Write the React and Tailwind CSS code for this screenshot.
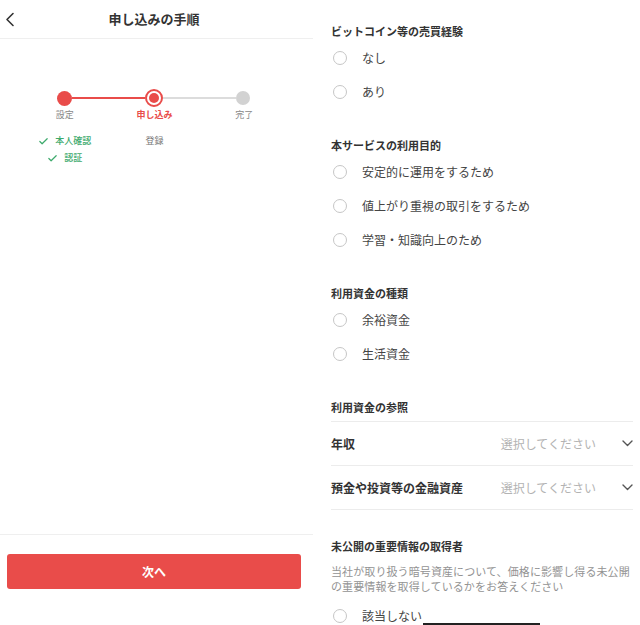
import { Check } from 'lucide-react'

const RED = 'bg-[#e94c4a]'

function Radio({ label }) {
  return (
    <div className="h-[34px] flex items-center">
      <span className="ml-[2px] w-[14px] h-[14px] rounded-full border-[1.5px] border-[#c6c6c6]" />
      <span className="ml-[15px] text-[12px] text-[#444]">{label}</span>
    </div>
  )
}

function SectionTitle({ children }) {
  return (
    <div className="h-[20px] flex items-center text-[11px] font-bold text-[#333]">{children}</div>
  )
}

function SelectRow({ label }) {
  return (
    <div className="h-[44px] flex items-center justify-between border-b border-[#ececec]">
      <span className="text-[12px] font-semibold text-[#333]">{label}</span>
      <div className="flex items-center gap-[26px]">
        <span className="text-[12px] text-[#b3b3b3]">選択してください</span>
        <svg width="11" height="7" viewBox="0 0 11 7" fill="none">
          <path d="M1 1l4.5 4.5L10 1" stroke="#555" strokeWidth="1.4" strokeLinecap="round" strokeLinejoin="round" />
        </svg>
      </div>
    </div>
  )
}

function LeftPanel() {
  return (
    <div className="w-[313px] h-[625px] flex flex-col bg-white">
      {/* Header */}
      <div className="h-[39px] border-b border-[#efefef] flex items-center relative">
        <svg className="ml-[5px]" width="10" height="15" viewBox="0 0 10 15" fill="none">
          <path d="M8 1.5L2 7.5l6 6" stroke="#333" strokeWidth="1.6" strokeLinecap="round" strokeLinejoin="round" />
        </svg>
        <div className="absolute inset-0 flex items-center justify-center pr-[5px] text-[13px] font-bold text-[#333]">
          申し込みの手順
        </div>
      </div>

      {/* Stepper */}
      <div className="mt-[50px] h-[18px] ml-[57px] w-[193px] flex items-center">
        <span className={`w-[15px] h-[15px] rounded-full ${RED}`} />
        <span className={`flex-1 h-[2px] ${RED}`} />
        <span className="w-[18px] h-[18px] rounded-full border-[2px] border-[#e94c4a] bg-white flex items-center justify-center">
          <span className={`w-[10px] h-[10px] rounded-full ${RED}`} />
        </span>
        <span className="flex-1 h-[2px] bg-[#dcdcdc]" />
        <span className="w-[14px] h-[14px] rounded-full bg-[#d2d2d2]" />
      </div>
      <div className="mt-[1px] ml-[20px] w-[269px] grid grid-cols-3 text-center text-[9px] h-[14px] items-center">
        <span className="text-[#888]">設定</span>
        <span className="text-[#e94c4a] font-bold">申し込み</span>
        <span className="text-[#888]">完了</span>
      </div>
      <div className="mt-[11px] ml-[20px] w-[269px] grid grid-cols-3 text-[9px]">
        <div className="flex flex-col items-center gap-[1px]">
          <div className="h-[16px] flex items-center gap-[6px] text-[#3daa6c] font-medium">
            <Check className="w-[11px] h-[11px]" strokeWidth={2.6} />
            <span>本人確認</span>
          </div>
          <div className="h-[16px] flex items-center gap-[6px] text-[#3daa6c] font-medium">
            <Check className="w-[11px] h-[11px]" strokeWidth={2.6} />
            <span>認証</span>
          </div>
        </div>
        <div className="flex justify-center">
          <div className="h-[16px] flex items-center text-[#777]">登録</div>
        </div>
        <div />
      </div>

      <div className="flex-1" />

      {/* Footer */}
      <div className="h-[91px] border-t border-[#efefef] pt-[19px]">
        <button className={`ml-[7px] w-[294px] h-[35px] rounded-[3px] ${RED} text-white text-[12px] font-bold`}>
          次へ
        </button>
      </div>
    </div>
  )
}

function RightPanel() {
  return (
    <div className="relative flex-1 h-[625px] overflow-hidden bg-white pl-[18px] pr-[7px] pt-[21px] flex flex-col gap-[26px]">
      <div>
        <SectionTitle>ビットコイン等の売買経験</SectionTitle>
        <Radio label="なし" />
        <Radio label="あり" />
      </div>

      <div>
        <SectionTitle>本サービスの利用目的</SectionTitle>
        <Radio label="安定的に運用をするため" />
        <Radio label="値上がり重視の取引をするため" />
        <Radio label="学習・知識向上のため" />
      </div>

      <div>
        <SectionTitle>利用資金の種類</SectionTitle>
        <Radio label="余裕資金" />
        <Radio label="生活資金" />
      </div>

      <div>
        <SectionTitle>利用資金の参照</SectionTitle>
        <div className="mt-[4px] border-t border-[#ececec]">
          <SelectRow label="年収" />
          <SelectRow label="預金や投資等の金融資産" />
        </div>
      </div>

      <div>
        <SectionTitle>未公開の重要情報の取得者</SectionTitle>
        <p className="mt-[8px] text-[11px] leading-[15px] text-[#939393] whitespace-nowrap tracking-[0.1px]">
          当社が取り扱う暗号資産について、価格に影響し得る未公開
          <br />
          の重要情報を取得しているかをお答えください
        </p>
        <div className="mt-[5px]">
          <Radio label="該当しない" />
        </div>
      </div>

      {/* home indicator */}
      <div className="absolute left-[110px] bottom-0 w-[117px] h-[2px] bg-[#222]" />
    </div>
  )
}

export default function App() {
  return (
    <div
      className="w-[640px] h-[625px] flex bg-white overflow-hidden"
      style={{ fontFamily: '"Noto Sans CJK JP", "Noto Sans", sans-serif' }}
    >
      <LeftPanel />
      <RightPanel />
    </div>
  )
}
